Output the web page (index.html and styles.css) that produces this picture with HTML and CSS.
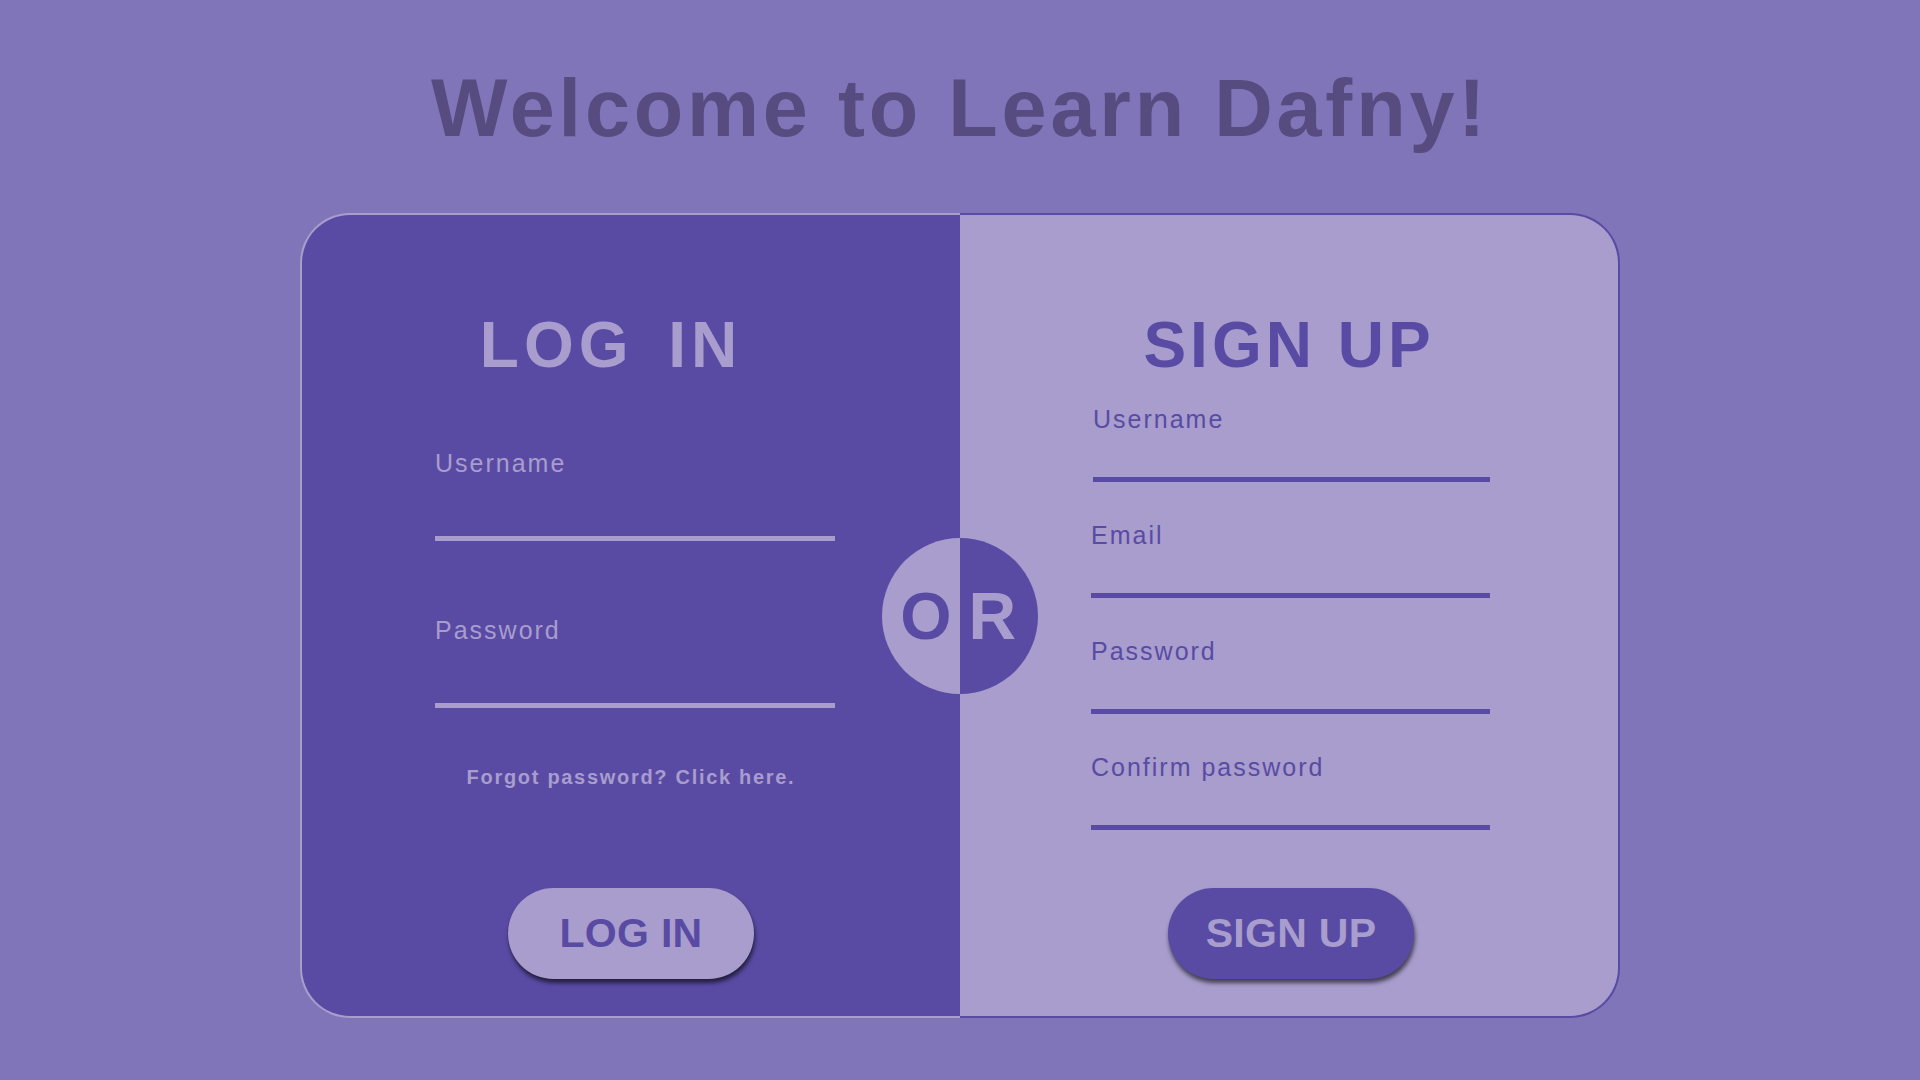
FILE: index.html
```html
<!DOCTYPE html>
<html lang="en">
<head>
<meta charset="utf-8">
<title>Learn Dafny</title>
<link rel="stylesheet" href="styles.css">
</head>
<body>
<main class="page">
  <h1 class="title">Welcome to Learn Dafny!</h1>
  <div class="card">
    <section class="panel panel-login">
      <h2 class="heading heading-login">LOG IN</h2>
      <div class="field field-login field-first-login">
        <label class="label">Username</label>
        <div class="line"></div>
      </div>
      <div class="field field-login field-next-login">
        <label class="label">Password</label>
        <div class="line"></div>
      </div>
      <p class="forgot">Forgot password? Click here.</p>
      <button class="btn btn-login">LOG IN</button>
    </section>
    <section class="panel panel-signup">
      <h2 class="heading heading-signup">SIGN UP</h2>
      <div class="field field-signup field-first-signup">
        <label class="label">Username</label>
        <div class="line"></div>
      </div>
      <div class="field field-signup">
        <label class="label">Email</label>
        <div class="line"></div>
      </div>
      <div class="field field-signup">
        <label class="label">Password</label>
        <div class="line"></div>
      </div>
      <div class="field field-signup">
        <label class="label">Confirm password</label>
        <div class="line"></div>
      </div>
      <button class="btn btn-signup">SIGN UP</button>
    </section>
    <div class="or">
      <span class="or-half or-left">O</span>
      <span class="or-half or-right">R</span>
    </div>
  </div>
</main>
</body>
</html>
```

FILE: styles.css
```css
html, body {
  margin: 0;
  padding: 0;
}

body {
  width: 1920px;
  height: 1080px;
  overflow: hidden;
  background: #8075b8;
  font-family: "Liberation Sans", Arial, sans-serif;
}

.page {
  display: flex;
  flex-direction: column;
  align-items: center;
  padding-top: 62px;
}

.title {
  margin: 0;
  font-size: 81px;
  line-height: 93px;
  font-weight: bold;
  letter-spacing: 3.8px;
  color: #574c80;
}

.card {
  position: relative;
  display: flex;
  width: 1320px;
  height: 805px;
  margin-top: 58px;
}

.panel {
  flex: 1;
  box-sizing: border-box;
  display: flex;
  flex-direction: column;
  padding-top: 93px;
}

.panel-login {
  background: #594ba4;
  border: 2px solid #a89dcd;
  border-right: none;
  border-radius: 50px 0 0 50px;
  color: #a89dcd;
}

.panel-signup {
  background: #a89dcd;
  border: 2px solid #594ba4;
  border-left: none;
  border-radius: 0 50px 50px 0;
  color: #594ba4;
}

.heading {
  margin: 0;
  font-size: 64px;
  line-height: 74px;
  font-weight: bold;
  text-align: center;
}

.heading-login {
  letter-spacing: 5px;
  word-spacing: 12px;
  padding-right: 40px;
}

.heading-signup {
  letter-spacing: 4px;
}

.field {
  display: flex;
  flex-direction: column;
}

.label {
  font-size: 25px;
  line-height: 29px;
  letter-spacing: 2px;
}

.line {
  height: 5px;
}

.field-login {
  width: 400px;
  margin-left: 133px;
}

.field-login .line {
  margin-top: 58px;
  background: #a89dcd;
}

.field-first-login {
  margin-top: 67px;
}

.field-next-login {
  margin-top: 75px;
}

.field-signup {
  width: 399px;
  margin-left: 131px;
  margin-top: 39px;
}

.field-signup .line {
  margin-top: 43px;
  background: #594ba4;
}

.field-first-signup {
  margin-top: 23px;
  margin-left: 133px;
  width: 397px;
}

.forgot {
  margin: 58px 0 0;
  font-size: 20px;
  line-height: 23px;
  font-weight: bold;
  letter-spacing: 1.7px;
  text-align: center;
}

.btn {
  align-self: center;
  width: 246px;
  height: 91px;
  border: none;
  border-radius: 46px;
  padding: 0;
  font-family: "Liberation Sans", Arial, sans-serif;
  font-size: 41px;
  line-height: 1;
  font-weight: bold;
  letter-spacing: 0.3px;
  box-shadow: 1px 4px 4px rgba(0, 0, 0, 0.6);
}

.btn-login {
  margin-top: 99px;
  background: #a89dcd;
  color: #594ba4;
}

.btn-signup {
  margin-top: 58px;
  margin-left: 4px;
  background: #594ba4;
  color: #a89dcd;
}

.or {
  position: absolute;
  left: 50%;
  top: 50%;
  width: 156px;
  height: 156px;
  margin: -78px 0 0 -78px;
  border-radius: 50%;
  overflow: hidden;
  display: flex;
}

.or-half {
  flex: 1;
  display: flex;
  align-items: center;
  font-size: 66px;
  line-height: 1;
  font-weight: bold;
}

.or-left {
  background: #a89dcd;
  color: #594ba4;
  justify-content: flex-end;
  padding-right: 8px;
}

.or-right {
  background: #594ba4;
  color: #a89dcd;
  justify-content: flex-start;
  padding-left: 9px;
}
```
